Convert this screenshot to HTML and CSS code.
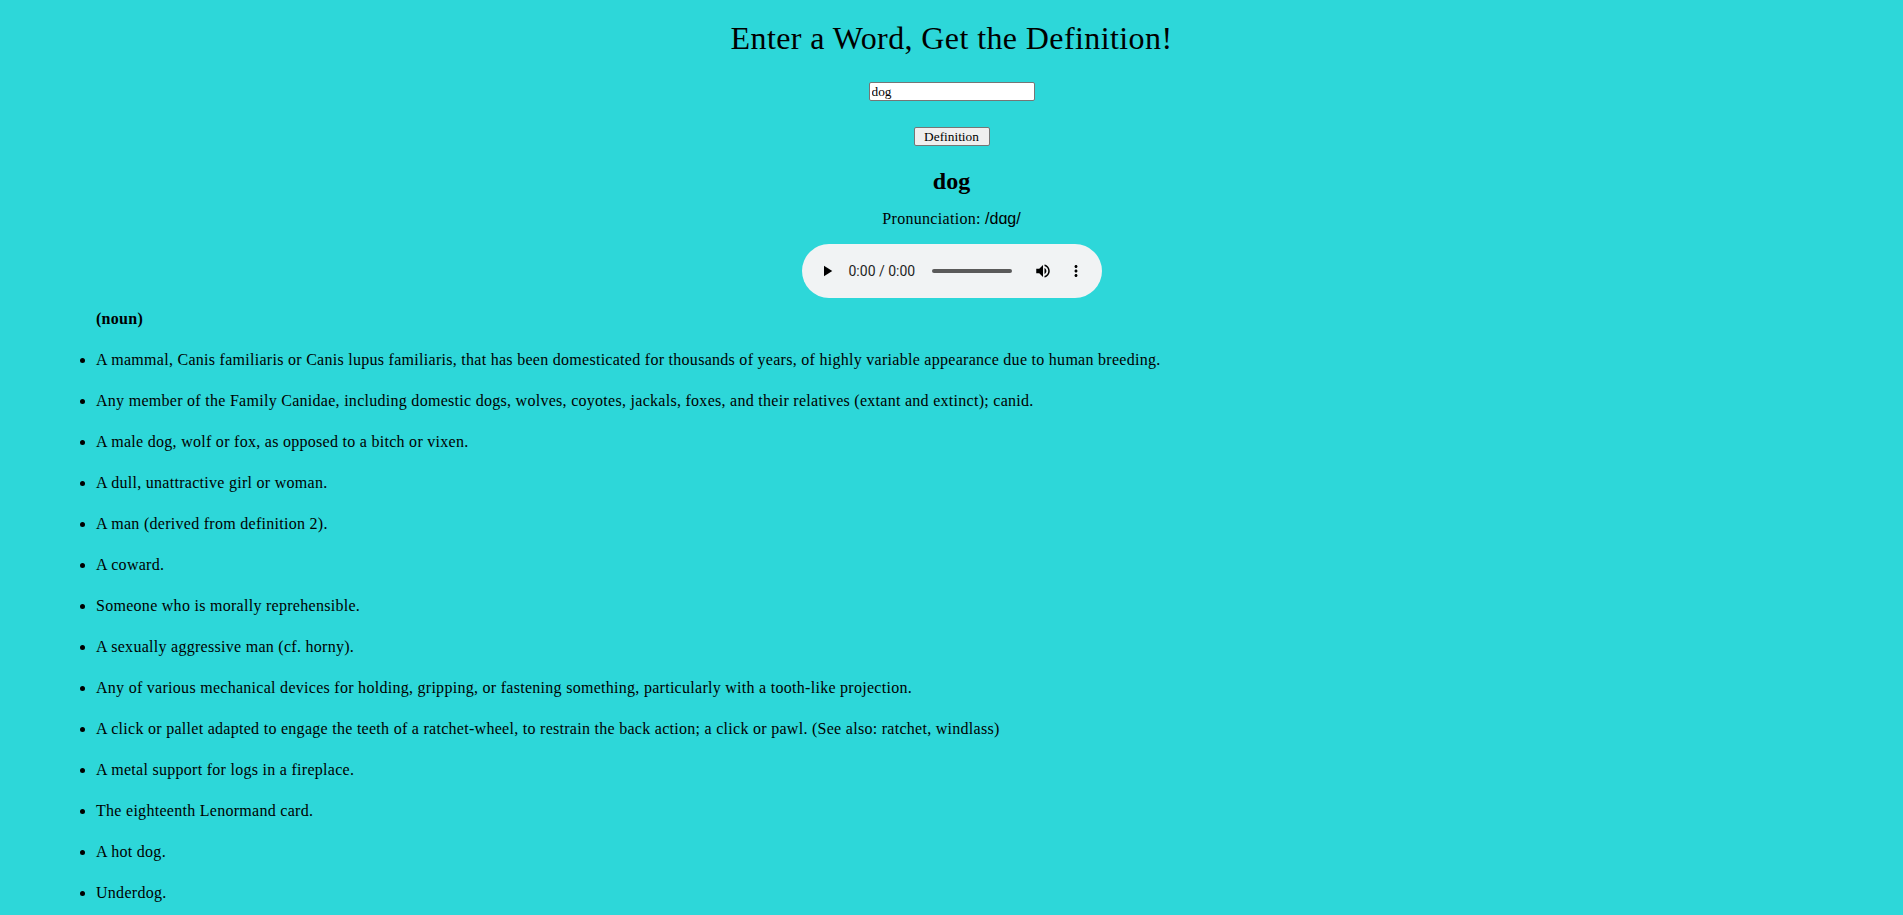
FILE: index.html
```html
<!DOCTYPE html>
<html lang="en">
<head>
<meta charset="utf-8">
<title>Dictionary</title>
<link rel="stylesheet" href="styles.css">
</head>
<body>
  <header class="search">
    <h1 class="title">Enter a Word, Get the Definition!</h1>
    <input class="word-input" type="text" value="dog">
    <button class="def-button" type="button">Definition</button>
  </header>
  <section class="result">
    <h2 class="word">dog</h2>
    <p class="pron">Pronunciation: <span class="ipa">/dɑg/</span></p>
    <div class="player" role="group" aria-label="audio player">
      <svg class="ico play" width="18" height="18" viewBox="0 0 24 24"><path d="M8 5v14l11-7z"/></svg>
      <span class="time">0:00 / 0:00</span>
      <span class="track"></span>
      <svg class="ico vol" width="18" height="18" viewBox="0 0 24 24"><path d="M3 9v6h4l5 5V4L7 9H3zm13.5 3c0-1.770-1.020-3.290-2.500-4.030v8.050c1.480-.730 2.500-2.250 2.500-4.020zM14 3.230v2.060c2.890.860 5 3.540 5 6.710s-2.110 5.850-5 6.710v2.060c4.010-.910 7-4.490 7-8.770s-2.990-7.860-7-8.770z"/></svg>
      <svg class="ico more" width="18" height="18" viewBox="0 0 24 24"><path d="M12 8c1.1 0 2-.9 2-2s-.9-2-2-2-2 .9-2 2 .9 2 2 2zm0 2c-1.1 0-2 .9-2 2s.9 2 2 2 2-.9 2-2-.9-2-2-2zm0 6c-1.1 0-2 .9-2 2s.9 2 2 2 2-.9 2-2-.9-2-2-2z"/></svg>
    </div>
  </section>
  <section class="meanings">
    <p class="pos">(noun)</p>
    <ul class="defs">
      <li>A mammal, Canis familiaris or Canis lupus familiaris, that has been domesticated for thousands of years, of highly variable appearance due to human breeding.</li>
      <li>Any member of the Family Canidae, including domestic dogs, wolves, coyotes, jackals, foxes, and their relatives (extant and extinct); canid.</li>
      <li>A male dog, wolf or fox, as opposed to a bitch or vixen.</li>
      <li>A dull, unattractive girl or woman.</li>
      <li>A man (derived from definition 2).</li>
      <li>A coward.</li>
      <li>Someone who is morally reprehensible.</li>
      <li>A sexually aggressive man (cf. horny).</li>
      <li>Any of various mechanical devices for holding, gripping, or fastening something, particularly with a tooth-like projection.</li>
      <li>A click or pallet adapted to engage the teeth of a ratchet-wheel, to restrain the back action; a click or pawl. (See also: ratchet, windlass)</li>
      <li>A metal support for logs in a fireplace.</li>
      <li>The eighteenth Lenormand card.</li>
      <li>A hot dog.</li>
      <li>Underdog.</li>
      <li>A person.</li>
    </ul>
  </section>
</body>
</html>
```
FILE: styles.css
```css
html, body {
  margin: 0;
  padding: 0;
}
body {
  background: #2dd7d9;
  color: #000;
  font-family: "Liberation Serif", "DejaVu Serif", serif;
  font-size: 16px;
}
.search {
  display: flex;
  flex-direction: column;
  align-items: center;
}
.title {
  font-size: 32px;
  font-weight: normal;
  line-height: 37px;
  letter-spacing: 0.4px;
  margin: 20px 0 25px;
}
.word-input {
  box-sizing: border-box;
  width: 166px;
  height: 19px;
  padding: 0 2px;
  border: 1px solid #767676;
  border-radius: 2px;
  background: #fff;
  font-family: "Liberation Serif", serif;
  font-size: 13.33px;
  color: #000;
}
.def-button {
  margin-top: 26px;
  box-sizing: border-box;
  height: 19px;
  width: 76px;
  padding: 0 6px;
  border: 1px solid #767676;
  border-radius: 2px;
  background: #efefef;
  font-family: "Liberation Serif", serif;
  font-size: 13.33px;
  color: #000;
}
.result {
  display: flex;
  flex-direction: column;
  align-items: center;
}
.word {
  font-size: 24px;
  line-height: 28px;
  margin: 21px 0 15px;
}
.pron {
  margin: 0 0 16px;
  line-height: 17px;
  letter-spacing: 0.3px;
}
.ipa {
  font-family: "Liberation Sans", Arial, sans-serif;
  letter-spacing: 0;
}
.player {
  box-sizing: border-box;
  width: 300px;
  height: 54px;
  margin-top: 1px;
  border-radius: 27px;
  background: #f1f3f4;
  display: flex;
  align-items: center;
  padding-left: 16px;
}
.ico {
  flex: none;
  fill: #000;
}
.time {
  margin-left: 13px;
  width: 65px;
  font-family: Roboto, "Liberation Sans", sans-serif;
  font-size: 14px;
  color: #1f1f1f;
  white-space: nowrap;
}
.track {
  margin-left: 18px;
  width: 80px;
  height: 4px;
  border-radius: 2px;
  background: #5a5a5a;
}
.vol {
  margin-left: 22px;
}
.more {
  margin-left: 15px;
}
.meanings {
  padding-left: 96px;
  letter-spacing: 0.28px;
}
.pos {
  font-weight: bold;
  margin: 12px 0 0;
  line-height: 18px;
}
.defs {
  margin: 0;
  padding: 0;
  padding-top: 3px;
  line-height: 25px;
}
.defs li {
  margin: 16px 0;
}
```
